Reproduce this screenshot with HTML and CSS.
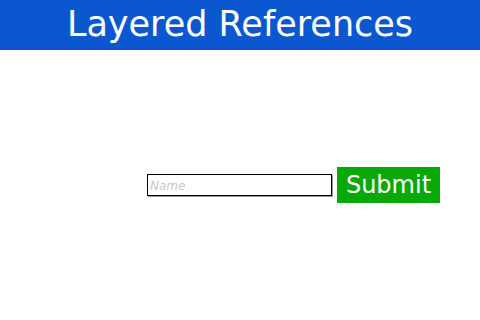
FILE: index.html
```html
<!DOCTYPE html>
<html lang="en">
<head>
  <meta charset="UTF-8" />
  <meta name="viewport" content="width=device-width, initial-scale=1.0"/>
  <title>Layered References</title>
  <link rel="stylesheet" href="styles.css">
</head>
<body>
  <h1 class="header">Layered References</h1>
  <div class="main">
    <form class="name-form" onsubmit="return false">
      <input type="text" class="name-input" placeholder="Name" autofocus />
      <button type="submit" class="submit-btn">Submit</button>
    </form>
  </div>
</body>
</html>
```

FILE: styles.css
```css
html, body {
  height: 100%;
}
body {
  margin: 0;
  font-family: "DejaVu Sans", sans-serif;
  background: #fff;
  display: flex;
  flex-direction: column;
}
.header {
  margin: 0;
  height: 50px;
  line-height: 48px;
  background: #0b57d0;
  color: #fff;
  font-size: 35px;
  font-weight: normal;
  text-align: center;
}
.main {
  flex: 1;
  display: flex;
  align-items: center;
  justify-content: flex-end;
  padding-right: 40px;
}
.name-form {
  display: flex;
  align-items: center;
  gap: 5px;
}
.name-input {
  width: 185px;
  height: 22px;
  box-sizing: border-box;
  margin: 0;
  padding: 2px 2px 0;
  border: 1px solid #000;
  border-radius: 0;
  box-shadow: 1px 1px 0 #999;
  font-family: "DejaVu Sans", sans-serif;
  font-size: 12px;
  outline: none;
}
.name-input::placeholder {
  color: #c8c8c8;
  font-style: italic;
}
.submit-btn {
  width: 103px;
  height: 36px;
  margin: 0;
  padding: 0;
  border: none;
  border-radius: 0;
  background: #07a807;
  color: #fff;
  font-family: "DejaVu Sans", sans-serif;
  font-size: 24px;
}
```
